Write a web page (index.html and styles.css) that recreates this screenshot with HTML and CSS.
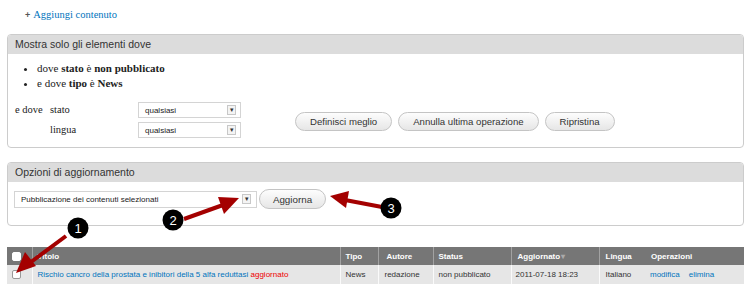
FILE: index.html
```html
<!DOCTYPE html>
<html lang="it">
<head>
    <meta charset="UTF-8">
    <title>Contenuti</title>
    <link rel="stylesheet" href="styles.css">
</head>
<body>
    <div class="page">
        <p class="add-link"><span class="plus">+</span><a href="#">Aggiungi contenuto</a></p>

        <!-- Filtri -->
        <div class="panel filters">
            <div class="panel-title">Mostra solo gli elementi dove</div>
            <div class="panel-body">
                <ul class="current">
                    <li>dove <strong>stato</strong> è <strong>non pubblicato</strong></li>
                    <li>e dove <strong>tipo</strong> è <strong>News</strong></li>
                </ul>
                <div class="filter-row">
                    <span class="and-where">e dove</span>
                    <div class="filter-grid">
                        <label>stato</label>
                        <div class="select"><span>qualsiasi</span><span class="arrow">▾</span></div>
                        <label>lingua</label>
                        <div class="select"><span>qualsiasi</span><span class="arrow">▾</span></div>
                    </div>
                    <div class="actions">
                        <button class="btn">Definisci meglio</button>
                        <button class="btn">Annulla ultima operazione</button>
                        <button class="btn">Ripristina</button>
                    </div>
                </div>
            </div>
        </div>

        <!-- Aggiornamento -->
        <div class="panel update">
            <div class="panel-title">Opzioni di aggiornamento</div>
            <div class="panel-body">
                <div class="select wide"><span>Pubblicazione dei contenuti selezionati</span><span class="arrow">▾</span></div>
                <button class="btn big">Aggiorna</button>
            </div>
        </div>

        <table class="content">
            <thead>
                <tr>
                    <th class="c-check"><span class="box head"></span></th>
                    <th class="c-title">Titolo</th>
                    <th class="c-type">Tipo</th>
                    <th class="c-author">Autore</th>
                    <th class="c-status">Status</th>
                    <th class="c-date">Aggiornato<span class="sort">▾</span></th>
                    <th class="c-lang">Lingua</th>
                    <th class="c-ops">Operazioni</th>
                </tr>
            </thead>
            <tbody>
                <tr>
                    <td class="c-check"><span class="box"></span></td>
                    <td class="c-title"><a href="#">Rischio cancro della prostata e inibitori della 5 alfa reduttasi</a> <span class="marker">aggiornato</span></td>
                    <td class="c-type">News</td>
                    <td class="c-author">redazione</td>
                    <td class="c-status">non pubblicato</td>
                    <td class="c-date">2011-07-18 18:23</td>
                    <td class="c-lang">Italiano</td>
                    <td class="c-ops"><a href="#">modifica</a><a href="#">elimina</a></td>
                </tr>
            </tbody>
        </table>
    </div>

    <!-- annotazioni -->
    <svg class="notes" width="752" height="290" viewBox="0 0 752 290">
        <g fill="#a40000" stroke="none">
            <line x1="66" y1="236" x2="31" y2="262" stroke="#a40000" stroke-width="4"/>
            <polygon points="16,273 36,266 25,252"/>
            <line x1="184" y1="219" x2="223" y2="205" stroke="#a40000" stroke-width="4"/>
            <polygon points="239,198 224,214 218,197"/>
            <line x1="382" y1="207" x2="345" y2="200" stroke="#a40000" stroke-width="4"/>
            <polygon points="330,196 349,191 346,208"/>
        </g>
        <g class="num">
            <circle cx="78" cy="228" r="10.5"/>
            <text x="78" y="232.5">1</text>
            <circle cx="173" cy="220" r="10.5"/>
            <text x="173" y="224.5">2</text>
            <circle cx="391" cy="208" r="10.5"/>
            <text x="391" y="212.5">3</text>
        </g>
    </svg>
</body>
</html>
```

FILE: styles.css
```css
body {
    margin: 0;
    font-family: "Liberation Sans", Arial, sans-serif;
    color: #333;
    background: #fff;
}
.page {
    position: relative;
    padding: 0 8px 0 7px;
    width: 737px;
}
a {
    color: #0074bd;
    text-decoration: none;
}
.add-link {
    margin: 0;
    padding: 8px 0 0 18px;
    height: 26px;
    font-family: "Liberation Serif", "Times New Roman", serif;
    font-size: 10.5px;
    line-height: 14px;
}
.add-link .plus {
    color: #555;
    font-weight: bold;
    font-size: 9px;
    margin-right: 3px;
    font-family: "Liberation Sans", Arial, sans-serif;
}
.panel {
    border: 1px solid #ccc;
    border-radius: 4px;
    background: #fff;
    overflow: hidden;
}
.panel-title {
    background: #dcdcdc;
    height: 19px;
    line-height: 19px;
    padding-left: 7px;
    font-size: 10.5px;
    color: #333;
}
.filters .panel-body {
    padding: 7px 6px 8px 7px;
    height: 78px;
}
.current {
    margin: 0;
    padding-left: 22px;
    font-family: "Liberation Serif", "Times New Roman", serif;
    font-size: 11px;
    line-height: 15px;
    color: #222;
}
.filter-row {
    display: flex;
    align-items: center;
    margin-top: 11px;
}
.and-where {
    font-family: "Liberation Serif", "Times New Roman", serif;
    font-size: 10.5px;
    width: 35px;
    align-self: flex-start;
    line-height: 16px;
    color: #222;
}
.filter-grid {
    display: grid;
    grid-template-columns: 88px 103px;
    row-gap: 4px;
}
.filter-grid label {
    font-family: "Liberation Serif", "Times New Roman", serif;
    font-size: 10.5px;
    line-height: 16px;
    color: #222;
}
.select {
    display: flex;
    align-items: center;
    justify-content: space-between;
    height: 16px;
    border: 1px solid #d4d4d4;
    box-sizing: border-box;
    padding: 0 4px 0 6px;
    font-size: 8px;
    color: #222;
    background: #fff;
}
.select .arrow {
    width: 7px;
    height: 8px;
    border: 1px solid #c8c8c8;
    background: #f4f4f4;
    font-size: 7px;
    line-height: 8px;
    text-align: center;
    color: #333;
}
.actions {
    display: flex;
    gap: 6px;
    margin-left: 54px;
    margin-top: 2px;
}
.btn {
    height: 19px;
    padding: 0 14px;
    border: 1px solid #c4c4c4;
    border-radius: 10px;
    background: linear-gradient(#fdfdfd, #e6e6e6);
    font-family: "Liberation Sans", Arial, sans-serif;
    font-size: 9.6px;
    color: #333;
}
.update {
    margin-top: 14px;
}
.update .panel-body {
    display: flex;
    align-items: center;
    gap: 2px;
    padding: 7px 6px 16px 6px;
}
.select.wide {
    width: 243px;
    height: 17px;
    padding-right: 5px;
}
.btn.big {
    height: 20px;
    width: 67px;
    padding: 0;
    font-size: 9.8px;
}
.content {
    margin-top: 21px;
    width: 737px;
    border-collapse: collapse;
    table-layout: fixed;
    font-size: 8px;
}
.content th, .content td {
    box-sizing: border-box;
    padding: 0 0 0 5px;
}
.content th {
    background: #767676;
    color: #fff;
    text-align: left;
    height: 18px;
    border-left: 1px solid #a2a2a2;
}
.content td {
    background: #e6e6e6;
    height: 19px;
    border-left: 1px solid #fafafa;
    white-space: nowrap;
}
.content .c-check { width: 25px; border-left: none; }
.content .c-title { width: 308px; }
.content .c-type { width: 38px; }
.content .c-author { width: 55px; }
.content .c-status { width: 78px; }
.content .c-date { width: 88px; }
.content .c-lang { width: 42px; }
.content .c-ops { border-left: none; }
.content th.c-ops { padding-left: 10px; }
.content td.c-ops { padding-left: 9px; }
.content td.c-ops a { margin-right: 9px; }
.content th.c-author { padding-left: 8px; }
.content td.c-author { padding-left: 6px; }
.content th.c-date, .content .c-lang { padding-left: 6px; }
.content td.c-date { padding-left: 4px; }
.sort {
    color: #aaa;
    margin-left: 1px;
}
.marker {
    color: #e00;
}
.box {
    display: inline-block;
    width: 7px;
    height: 7px;
    border: 1px solid #999;
    border-radius: 2px;
    background: #fff;
    vertical-align: middle;
}
.box.head {
    border-color: #fff;
}
.notes {
    position: absolute;
    top: 0;
    left: 0;
    pointer-events: none;
}
.num circle {
    fill: #000;
}
.num text {
    fill: #fff;
    font-family: "Liberation Sans", Arial, sans-serif;
    font-size: 13px;
    text-anchor: middle;
}
```
